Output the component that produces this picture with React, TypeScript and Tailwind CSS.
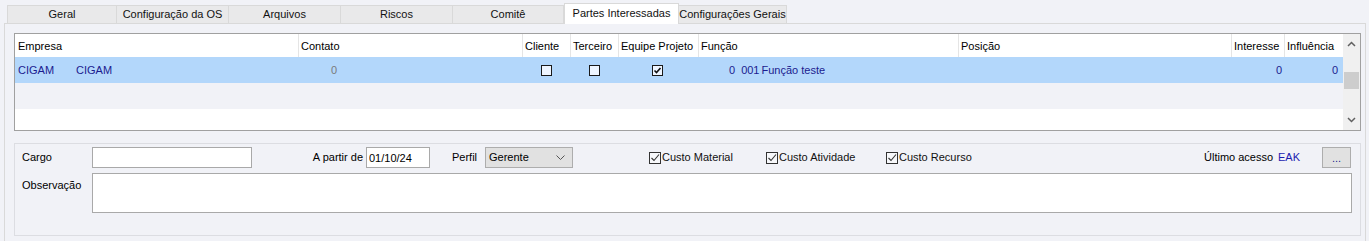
import type { ReactNode } from 'react'

const tabs = ['Geral', 'Configuração da OS', 'Arquivos', 'Riscos', 'Comitê', 'Partes Interessadas', 'Configurações Gerais']
const tabWidths = [110, 112, 112, 112, 111, 115, 108]

const columns = [
  { label: 'Empresa', width: 283 },
  { label: 'Contato', width: 224 },
  { label: 'Cliente', width: 48 },
  { label: 'Terceiro', width: 48 },
  { label: 'Equipe Projeto', width: 80 },
  { label: 'Função', width: 260 },
  { label: 'Posição', width: 273 },
  { label: 'Interesse', width: 53 },
  { label: 'Influência', width: 58 },
]

function GridCheck({ checked }: { checked?: boolean }) {
  return (
    <span className="flex h-[11px] w-[11px] items-center justify-center border border-[#1a1a1a] bg-[#eef5ff]">
      {checked && (
        <svg width="9" height="9" viewBox="0 0 9 9">
          <path d="M1.5 4.5 L3.5 6.5 L7.5 2" fill="none" stroke="#111" strokeWidth="1.6" />
        </svg>
      )}
    </span>
  )
}

function FormCheck({ label }: { label: string }) {
  return (
    <label className="flex items-center whitespace-nowrap">
      <span className="flex h-[12px] w-[12px] items-center justify-center border border-[#333] bg-[#f7f8fb]">
        <svg width="10" height="10" viewBox="0 0 10 10">
          <path d="M1.5 5 L4 7.5 L9 1.5" fill="none" stroke="#333" strokeWidth="1.1" />
        </svg>
      </span>
      <span className="ml-[1px] text-[#111]">{label}</span>
    </label>
  )
}

function Cell({ w, children, className = '' }: { w: number; children?: ReactNode; className?: string }) {
  return (
    <div className={`flex h-full shrink-0 items-center whitespace-nowrap ${className}`} style={{ width: w }}>
      {children}
    </div>
  )
}

export default function App() {
  return (
    <div className="h-[241px] w-[1369px] overflow-hidden bg-[#f1f2f7] font-['Liberation_Sans',Arial,sans-serif] text-[11px] text-black">
      {/* tabs */}
      <div className="flex h-[23px] items-end pl-[7px]">
        {tabs.map((t, i) => {
          const active = i === 5
          return (
            <div
              key={t}
              style={{ width: tabWidths[i] }}
              className={
                active
                  ? 'relative z-10 -mb-[1px] flex h-[21px] shrink-0 items-center justify-center border border-b-0 border-[#d9d9d9] bg-white pb-[2px] text-[#111]'
                  : `flex h-[18px] shrink-0 items-center justify-center border-t border-r border-[#d9d9d9] bg-[#e9e9ea] text-[#111] ${i === 0 ? 'border-l' : ''}`
              }
            >
              {t}
            </div>
          )
        })}
      </div>

      {/* panel */}
      <div className="ml-[4px] h-[218px] w-[1362px] border-t border-r border-l border-[#d9d9d9] pt-[9px] pl-[9px]">
        {/* grid */}
        <div className="flex h-[98px] w-[1347px] border border-[#a0a0a0] bg-white">
          <div className="flex flex-1 flex-col">
            <div className="flex h-[23px] bg-white">
              {columns.map((c, i) => (
                <Cell key={c.label} w={c.width} className={`${i === 0 ? 'pl-[3px]' : 'border-l border-[#e5e5e5] pl-[2px]'} pt-[1px]`}>
                  {c.label}
                </Cell>
              ))}
            </div>
            <div className="flex h-[26px] bg-[#b3d7fb] text-[#1b1b8f]">
              <Cell w={283} className="pl-[3px]">
                <span>CIGAM</span>
                <span className="ml-[22px]">CIGAM</span>
              </Cell>
              <Cell w={224} className="pl-[33px] text-[#7a7a7a]">0</Cell>
              <Cell w={48} className="justify-center">
                <GridCheck />
              </Cell>
              <Cell w={48} className="justify-center">
                <GridCheck />
              </Cell>
              <Cell w={80} className="justify-center pr-[2px]">
                <GridCheck checked />
              </Cell>
              <Cell w={260} className="pl-[31px]">
                <span>0</span>
                <span className="ml-[6px]">001</span>
                <span className="ml-[2px]">Função teste</span>
              </Cell>
              <Cell w={273} />
              <Cell w={53} className="justify-end pr-[2px]">0</Cell>
              <Cell w={58} className="justify-end pr-[4px]">0</Cell>
            </div>
            <div className="h-[26px] bg-[#f1f2f7]" />
            <div className="flex-1 bg-white" />
          </div>
          {/* scrollbar */}
          <div className="flex w-[17px] flex-col items-center bg-[#f0f0f0]">
            <svg className="mt-[7px]" width="9" height="6" viewBox="0 0 9 6">
              <path d="M1 5 L4.5 1.5 L8 5" fill="none" stroke="#606060" strokeWidth="1.5" />
            </svg>
            <div className="mt-[25px] h-[17px] w-[15px] bg-[#cdcdcd]" />
            <div className="flex-1" />
            <svg className="mb-[7px]" width="9" height="6" viewBox="0 0 9 6">
              <path d="M1 1 L4.5 4.5 L8 1" fill="none" stroke="#606060" strokeWidth="1.5" />
            </svg>
          </div>
        </div>

        {/* detail group */}
        <div className="mt-[12px] h-[93px] w-[1347px] border border-[#dcdde2] pt-[3px] pl-[7px]">
          <div className="flex h-[21px] items-center whitespace-nowrap">
            <span className="w-[70px] shrink-0">Cargo</span>
            <input className="h-[21px] w-[160px] shrink-0 border border-[#a9a9a9] bg-white outline-none" />
            <span className="w-[114px] shrink-0 pr-[3px] text-right">A partir de</span>
            <input
              defaultValue="01/10/24"
              className="h-[21px] w-[64px] shrink-0 border border-[#a9a9a9] bg-white pl-[2px] text-[11px] text-black outline-none"
            />
            <span className="w-[55px] shrink-0 pl-[22px]">Perfil</span>
            <div className="flex h-[21px] w-[88px] shrink-0 items-center justify-between border border-[#adadad] bg-[#e1e1e1] pr-[7px] pl-[3px]">
              <span>Gerente</span>
              <svg width="9" height="5" viewBox="0 0 9 5">
                <path d="M0.5 0.5 L4.5 4.5 L8.5 0.5" fill="none" stroke="#555" strokeWidth="1" />
              </svg>
            </div>
            <div className="ml-[76px] w-[117px] shrink-0">
              <FormCheck label="Custo Material" />
            </div>
            <div className="w-[120px] shrink-0">
              <FormCheck label="Custo Atividade" />
            </div>
            <div className="w-[318px] shrink-0">
              <FormCheck label="Custo Recurso" />
            </div>
            <span className="w-[74px] shrink-0">Último acesso</span>
            <span className="w-[44px] shrink-0 text-[#1b1bb0]">EAK</span>
            <button className="flex h-[21px] w-[29px] shrink-0 items-end justify-center border border-[#adadad] bg-[#e1e1e1] pb-[3px] leading-none text-[#1b1b8f]">
              ...
            </button>
          </div>
          <div className="mt-[5px] flex">
            <span className="w-[70px] shrink-0 pt-[4px]">Observação</span>
            <textarea className="h-[40px] w-[1260px] shrink-0 resize-none border border-[#a9a9a9] bg-white outline-none" />
          </div>
        </div>
      </div>
    </div>
  )
}
